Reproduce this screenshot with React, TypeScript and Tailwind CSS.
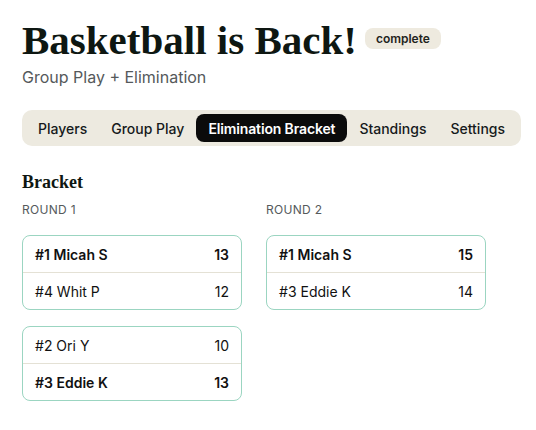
import React from "react";

type Row = { seed: number; name: string; score: number; win: boolean };

const round1: Row[][] = [
  [
    { seed: 1, name: "Micah S", score: 13, win: true },
    { seed: 4, name: "Whit P", score: 12, win: false },
  ],
  [
    { seed: 2, name: "Ori Y", score: 10, win: false },
    { seed: 3, name: "Eddie K", score: 13, win: true },
  ],
];

const round2: Row[][] = [
  [
    { seed: 1, name: "Micah S", score: 15, win: true },
    { seed: 3, name: "Eddie K", score: 14, win: false },
  ],
];

function Match({ rows }: { rows: Row[] }) {
  return (
    <div className="w-[220px] rounded-lg border border-[#9bd5c1] bg-white">
      {rows.map((r, i) => (
        <div
          key={i}
          className={`flex items-center justify-between px-3 text-[14px] text-[#111111] ${
            i > 0 ? "h-[37px] border-t border-[#e4e1d5]" : "h-9"
          } ${r.win ? "font-semibold" : "font-normal"}`}
        >
          <span>
            #{r.seed} {r.name}
          </span>
          <span>{r.score}</span>
        </div>
      ))}
    </div>
  );
}

function Round({ title, matches }: { title: string; matches: Row[][] }) {
  return (
    <div className="flex w-[220px] flex-col">
      <div className="text-[12px] leading-4 tracking-wide text-[#555a5c]">{title}</div>
      <div className="mt-[17px] flex flex-col gap-4">
        {matches.map((m, i) => (
          <Match key={i} rows={m} />
        ))}
      </div>
    </div>
  );
}

export default function App() {
  const tabs = ["Players", "Group Play", "Elimination Bracket", "Standings", "Settings"];
  return (
    <div
      className="min-h-screen overflow-hidden bg-white px-[22px] pt-[18px]"
      style={{ fontFamily: "Inter, 'Noto Sans', sans-serif" }}
    >
      <div className="flex items-center gap-[8px]">
        <h1
          className="whitespace-nowrap text-[41px] font-bold leading-[44px] text-[#0e1712]"
          style={{ fontFamily: "'Liberation Serif', serif" }}
        >
          Basketball is Back!
        </h1>
        <span className="mb-[4px] rounded-lg bg-[#eeeadf] px-[11px] py-[2px] text-[12px] font-semibold leading-[17px] text-[#1f2420]">
          complete
        </span>
      </div>
      <p className="mt-[3px] text-[16px] leading-6 text-[#55595b]">Group Play + Elimination</p>

      <div className="mt-[21px] flex">
        <div className="flex h-9 items-center whitespace-nowrap rounded-[10px] bg-[#edeae0] px-1">
          {tabs.map((t) => (
            <div
              key={t}
              className={`flex h-7 shrink-0 items-center rounded-lg px-3 text-[14px] ${
                t === "Elimination Bracket"
                  ? "bg-[#0b0b0b] font-semibold tracking-[-0.01em] text-white"
                  : "font-medium text-[#161a1c]"
              }`}
            >
              {t}
            </div>
          ))}
        </div>
      </div>

      <h2
        className="mt-6 text-[18px] font-bold leading-6 text-[#0e1712]"
        style={{ fontFamily: "'Liberation Serif', serif" }}
      >
        Bracket
      </h2>

      <div className="mt-2 flex gap-6">
        <Round title="ROUND 1" matches={round1} />
        <Round title="ROUND 2" matches={round2} />
      </div>
    </div>
  );
}
